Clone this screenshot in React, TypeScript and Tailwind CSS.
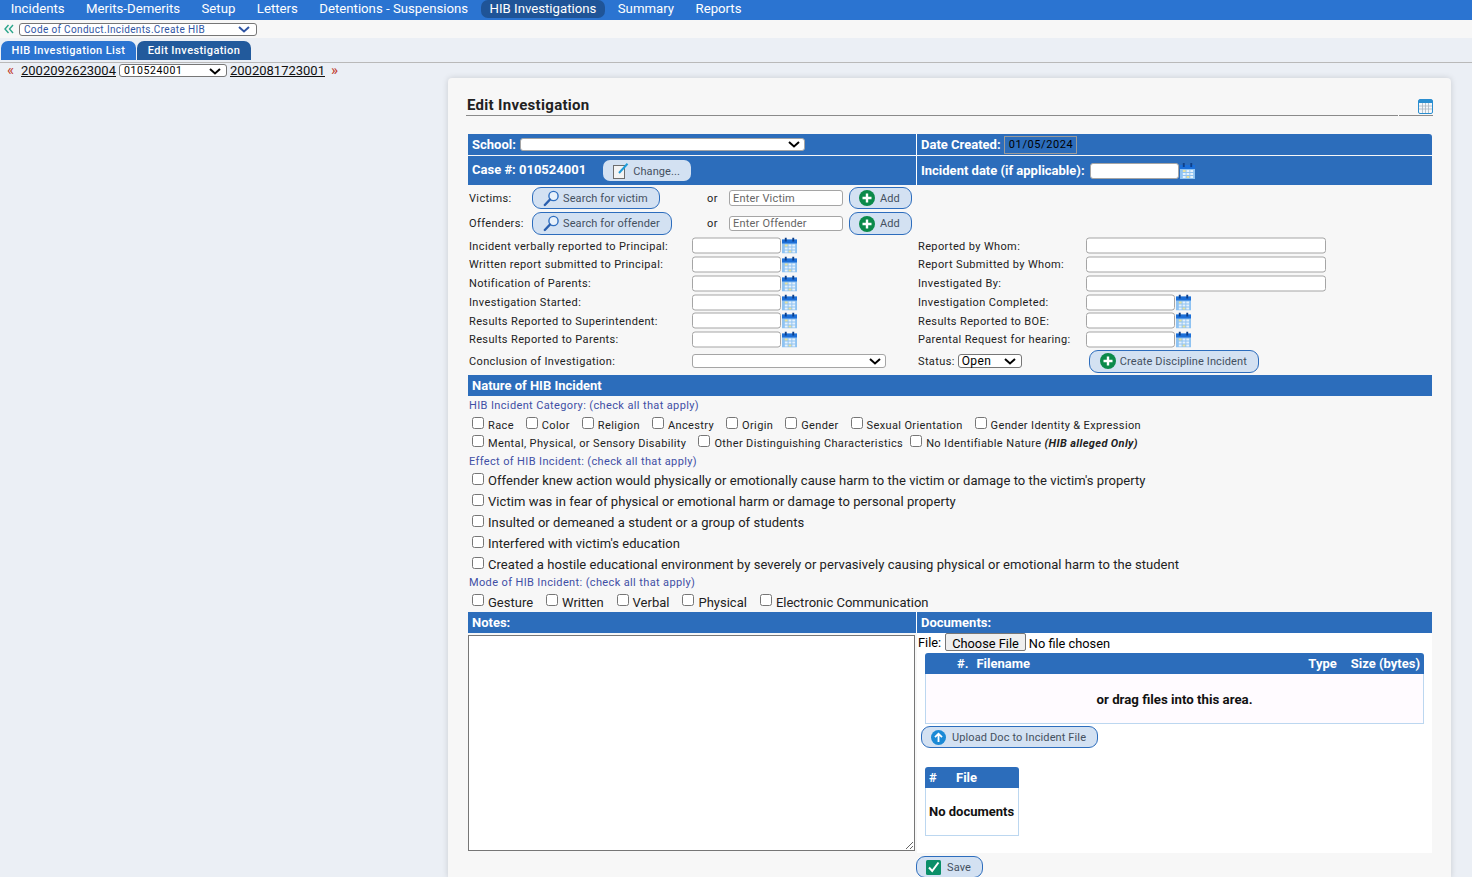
import type { ReactNode } from 'react';

function CalIcon({ className = '' }: { className?: string }) {
    return (
        <svg width="15" height="16" viewBox="0 0 16 16" preserveAspectRatio="none" className={`ml-px shrink-0 ${className}`}>
            <rect x="0" y="2" width="16" height="14" fill="#8fc3f2" />
            <rect x="0" y="2" width="16" height="4" fill="#1c6fd8" />
            <rect x="3" y="0" width="2" height="4" fill="#0d3f8a" />
            <rect x="11" y="0" width="2" height="4" fill="#0d3f8a" />
            <rect x="3" y="7" width="3" height="2" fill="#e8e2a0" />
            <rect x="7" y="7" width="3" height="2" fill="#e6f1fb" />
            <rect x="11" y="7" width="3" height="2" fill="#e6f1fb" />
            <rect x="3" y="10" width="3" height="2" fill="#e6f1fb" />
            <rect x="7" y="10" width="3" height="2" fill="#e6f1fb" />
            <rect x="11" y="10" width="3" height="2" fill="#e6f1fb" />
            <rect x="3" y="13" width="3" height="2" fill="#e6f1fb" />
            <rect x="7" y="13" width="3" height="2" fill="#e8e2a0" />
            <rect x="11" y="13" width="3" height="2" fill="#e6f1fb" />
        </svg>
    );
}

function PlusIcon() {
    return (
        <svg width="16" height="16" viewBox="0 0 16 16" className="shrink-0">
            <circle cx="8" cy="8" r="8" fill="#0b8a4a" />
            <path d="M8 3.500v9M3.500 8h9" stroke="#fff" strokeWidth="2.400" />
        </svg>
    );
}

function SearchIcon() {
    return (
        <svg width="17" height="17" viewBox="0 0 17 17" className="shrink-0">
            <circle cx="10.500" cy="6" r="4.600" fill="#e8f1fb" stroke="#2f6fc0" strokeWidth="1.400" />
            <path d="M7 9.500 1.800 15" stroke="#2a5fae" strokeWidth="2.400" strokeLinecap="round" />
        </svg>
    );
}

function PencilIcon() {
    return (
        <svg width="16" height="16" viewBox="0 0 16 16" className="shrink-0">
            <rect x="0.500" y="2.500" width="11" height="13" fill="#f4f4f4" stroke="#6d6d6d" />
            <path d="M6 10 14.500 0.800" stroke="#1f9bd8" strokeWidth="2" />
        </svg>
    );
}

function UploadIcon() {
    return (
        <svg width="15" height="15" viewBox="0 0 15 15" className="shrink-0">
            <circle cx="7.500" cy="7.500" r="7.500" fill="#1b8ad6" />
            <path d="M7.500 12V4M4 7.200l3.500-3.500L11 7.200" stroke="#fff" strokeWidth="1.800" fill="none" />
        </svg>
    );
}

function SaveIcon() {
    return (
        <svg width="15" height="15" viewBox="0 0 15 15" className="shrink-0">
            <rect width="15" height="15" rx="1.500" fill="#0a8f68" />
            <path d="M3 7.500 6.200 11 12.500 2.500" stroke="#fff" strokeWidth="2" fill="none" />
        </svg>
    );
}

function Pill({ icon, label, className }: { icon: ReactNode; label: string; className: string }) {
    return (
        <button className={`flex items-center rounded-[9px] border border-[#2d6dbd] bg-[#d3e1f2] text-[11px] tracking-[0.12px] text-[#44505f] ${className}`}>
            {icon}
            <span className="translate-y-px">{label}</span>
        </button>
    );
}

// closed dropdown: text on the left, heavy chevron on the right
function Dropdown({ text, className }: { text?: string; className: string }) {
    return (
        <div className={`flex items-center justify-between rounded-[3px] border bg-white leading-none ${className}`}>
            <span>{text}</span>
            <svg width="12" height="7" viewBox="0 0 12 7" className="shrink-0">
                <path d="M1 1l5 4.500L11 1" stroke="currentColor" strokeWidth="2" fill="none" />
            </svg>
        </div>
    );
}

function DateField({ wide }: { wide?: boolean }) {
    if (wide) {
        return <input className="h-[16px] w-[240px] -translate-y-[1.500px] rounded-[3px] border border-[#a5a5a5] bg-white" />;
    }
    return (
        <div className="flex -translate-y-[1.500px] items-center">
            <input className="h-[16px] w-[89px] rounded-[3px] border border-[#a5a5a5] bg-white" />
            <CalIcon />
        </div>
    );
}

function Check({ label, mr = 'mr-[8px]', lift = '-translate-y-[3px]' }: { label: ReactNode; mr?: string; lift?: string }) {
    return (
        <label className={`flex items-center ${mr}`}>
            <input type="checkbox" className={`m-0 ml-[4px] mr-[4px] h-[12px] w-[12px] ${lift}`} />
            <span>{label}</span>
        </label>
    );
}

const navItems = ['Incidents', 'Merits-Demerits', 'Setup', 'Letters', 'Detentions - Suspensions', 'HIB Investigations', 'Summary', 'Reports'];

const dateRows = [
    { h: 'h-[18px]', left: 'Incident verbally reported to Principal:', right: 'Reported by Whom:', wide: true },
    { h: 'h-[19px]', left: 'Written report submitted to Principal:', right: 'Report Submitted by Whom:', wide: true },
    { h: 'h-[19px]', left: 'Notification of Parents:', right: 'Investigated By:', wide: true },
    { h: 'h-[19px]', left: 'Investigation Started:', right: 'Investigation Completed:', wide: false },
    { h: 'h-[18px]', left: 'Results Reported to Superintendent:', right: 'Results Reported to BOE:', wide: false },
    { h: 'h-[19px]', left: 'Results Reported to Parents:', right: 'Parental Request for hearing:', wide: false },
];

const effects = [
    "Offender knew action would physically or emotionally cause harm to the victim or damage to the victim's property",
    'Victim was in fear of physical or emotional harm or damage to personal property',
    'Insulted or demeaned a student or a group of students',
    "Interfered with victim's education",
    'Created a hostile educational environment by severely or pervasively causing physical or emotional harm to the student',
];

export default function App() {
    return (
        <div className="flex h-[877px] flex-col overflow-hidden bg-[#ebeff5] font-['Roboto',sans-serif] text-[#222]">
            {/* top nav */}
            <nav className="flex h-[20px] shrink-0 items-start bg-[#2b74d1] text-[13.200px] text-white">
                {navItems.map((item) => (
                    <span
                        key={item}
                        className={`mx-[1.750px] flex h-[18px] items-center rounded-[7px] px-[9px] ${item === 'HIB Investigations' ? 'bg-[#1f5497]' : ''}`}
                    >
                        {item}
                    </span>
                ))}
            </nav>

            <div className="flex h-[18px] shrink-0 items-center bg-[#f7f7f7] pl-[4px]">
                <svg width="10" height="10" viewBox="0 0 10 10" className="mr-[5px]">
                    <path d="M4.500 1 1 5l3.500 4M9 1 5.500 5 9 9" stroke="#2aa58a" strokeWidth="1.400" fill="none" />
                </svg>
                <Dropdown
                    text="Code of Conduct.Incidents.Create HIB"
                    className="h-[13px] w-[238px] border-[#767676] pl-[4px] pr-[6px] pt-px text-[10px] tracking-[0.35px] text-[#2f55a4]"
                />
            </div>

            <div className="flex h-[25px] shrink-0 items-end border-b border-[#b9b9b9] pb-[2px] pl-[1px]">
                <div className="mr-[1px] flex h-[19px] w-[135px] items-center justify-center rounded-t-[7px] bg-[#2b74d1] pt-px text-[11px] font-medium tracking-[0.4px] text-white">
                    HIB Investigation List
                </div>
                <div className="flex h-[19px] w-[114px] items-center justify-center rounded-t-[7px] bg-[#225a9c] pt-px text-[11px] font-medium tracking-[0.4px] text-white">
                    Edit Investigation
                </div>
            </div>

            <div className="flex h-[15px] shrink-0 items-center pl-[7px] text-[13px] text-[#111]">
                <span className="w-[14px] text-[15px] leading-none text-[#c0392b]">«</span>
                <a className="underline">2002092623004</a>
                <Dropdown text="010524001" className="mx-[3px] h-[13px] w-[108px] border-[#767676] pl-[4px] pr-[5px] pt-[2px] text-[10.500px] tracking-[0.6px] text-black" />
                <a className="underline">2002081723001</a>
                <span className="ml-[6px] text-[15px] leading-none text-[#c0392b]">»</span>
            </div>

            {/* card */}
            <main className="ml-[448px] w-[1003px] shrink-0 grow rounded-t-[4px] bg-[#f7f7f7] pl-[20px] pr-[19px] shadow-[0_0_6px_rgba(0,0,0,0.15)]">
                <div className="relative -ml-[2px] -mr-[1px] flex h-[38px] items-end border-b border-[#8a8a8a]">
                    <h2 className="pl-px text-[15px] font-bold leading-[20px] tracking-[0.3px] text-[#222]">Edit Investigation</h2>
                    <span className="absolute -bottom-[1px] right-[34px] h-px w-px bg-white" />
                    <svg width="15" height="15" viewBox="0 0 15 15" className="absolute bottom-[1px] right-[0px]">
                        <rect x="0.500" y="0.500" width="14" height="14" rx="1.500" fill="#f4f7fa" stroke="#2a8ed0" />
                        <rect x="1" y="1" width="13" height="3" fill="#2a8ed0" />
                        <path d="M1 7h13M1 10h13M4.500 4v10M7.500 4v10M10.500 4v10" stroke="#a9b6c2" strokeWidth="0.800" />
                    </svg>
                </div>

                {/* header bars */}
                <div className="mt-[18px] grid grid-cols-[449px_515px] gap-y-px text-[13px] font-bold text-white">
                    <div className="flex h-[21px] items-center border-r border-white bg-[#2c6dbb] pl-[4px]">
                        <span className="mr-[4px]">School:</span>
                        <Dropdown className="h-[13px] w-[285px] border-[#a5a5a5] pr-[4px] text-black" />
                    </div>
                    <div className="flex h-[21px] items-center rounded-tr-[3px] bg-[#2c6dbb] pl-[4px]">
                        <span className="mr-[3px]">Date Created:</span>
                        <span className="flex h-[18px] w-[73px] items-center justify-center border border-[#9a9a9a] pl-[2px] pt-[2px] text-[11px] font-normal tracking-[0.6px] text-black">01/05/2024</span>
                    </div>
                    <div className="flex h-[29px] items-center border-r border-white bg-[#2c6dbb] pl-[4px]">
                        <span className="mr-[17px] -translate-y-px">Case #: 010524001</span>
                        <button className="flex h-[21px] w-[88px] items-center rounded-[7px] bg-[#d3e1f2] pl-[10px] text-[11px] font-normal tracking-[0.1px] text-[#44505f]">
                            <PencilIcon />
                            <span className="ml-[4px] translate-y-[2px]">Change...</span>
                        </button>
                    </div>
                    <div className="flex h-[29px] items-center bg-[#2c6dbb] pl-[4px]">
                        <span className="mr-[5px]">Incident date (if applicable):</span>
                        <input className="h-[16px] w-[89px] rounded-[3px] border border-[#a5a5a5] bg-white" />
                        <CalIcon />
                    </div>
                </div>

                {/* victims / offenders */}
                <div className="w-[448px] text-[11px] tracking-[0.37px]">
                    <div className="mt-[2px] flex h-[22px] items-center pl-[1px]">
                        <span className="w-[63px] translate-y-px">Victims:</span>
                        <Pill icon={<SearchIcon />} label="Search for victim" className="h-[22px] w-[128px] pl-[10px] [&>span]:ml-[3px]" />
                        <span className="ml-[47px] w-[22px] translate-y-px">or</span>
                        <input placeholder="Enter Victim" className="h-[16px] w-[114px] rounded-[3px] border border-[#a5a5a5] bg-white pl-[3px] pt-[2px] tracking-[0.2px] placeholder:text-[#666]" />
                        <Pill icon={<PlusIcon />} label="Add" className="ml-[6px] h-[22px] w-[63px] pl-[9px] [&>span]:ml-[5px]" />
                    </div>
                    <div className="mt-[3px] flex h-[23px] items-center pl-[1px]">
                        <span className="w-[63px] pt-px">Offenders:</span>
                        <Pill icon={<SearchIcon />} label="Search for offender" className="h-[23px] w-[140px] pl-[10px] [&>span]:ml-[3px]" />
                        <span className="ml-[35px] w-[22px] pt-px">or</span>
                        <input placeholder="Enter Offender" className="h-[15px] w-[114px] rounded-[3px] border border-[#a5a5a5] bg-white pl-[3px] pt-[2px] tracking-[0.2px] placeholder:text-[#666]" />
                        <Pill icon={<PlusIcon />} label="Add" className="ml-[6px] h-[23px] w-[63px] pl-[9px] [&>span]:ml-[5px]" />
                    </div>
                </div>

                {/* date rows */}
                <div className="mt-[3px] text-[11px] tracking-[0.37px]">
                    {dateRows.map((row) => (
                        <div key={row.left} className={`grid grid-cols-[450px_514px] items-center ${row.h}`}>
                            <div className="flex items-center pl-[1px]">
                                <span className="w-[223px]">{row.left}</span>
                                <DateField />
                            </div>
                            <div className="flex items-center">
                                <span className="w-[168px]">{row.right}</span>
                                <DateField wide={row.wide} />
                            </div>
                        </div>
                    ))}
                    <div className="grid h-[24px] grid-cols-[450px_514px] items-center">
                        <div className="flex items-center pl-[1px]">
                            <span className="w-[223px]">Conclusion of Investigation:</span>
                            <Dropdown className="h-[14px] w-[194px] -translate-y-px border-[#a5a5a5] pr-[4px] text-black" />
                        </div>
                        <div className="flex items-center">
                            <span className="mr-[3px]">Status:</span>
                            <Dropdown text="Open" className="h-[14px] w-[64px] -translate-y-px border-[#767676] pl-[3px] pr-[5px] text-[12px] tracking-[0.4px] text-black" />
                            <Pill icon={<PlusIcon />} label="Create Discipline Incident" className="ml-[67px] h-[23px] w-[170px] -translate-y-px pl-[10px] [&>span]:ml-[4px]" />
                        </div>
                    </div>
                </div>

                {/* nature of incident */}
                <div className="mt-[1px] flex h-[21px] items-center bg-[#2c6dbb] pl-[4px] text-[13px] font-bold text-white">Nature of HIB Incident</div>
                <div className="text-[11px] tracking-[0.37px]">
                    <div className="mt-[2px] flex h-[16px] items-center pl-[1px] text-[#3f4fa5]">HIB Incident Category: (check all that apply)</div>
                    <div className="mt-[3px] flex h-[18px] items-center">
                        {['Race', 'Color', 'Religion', 'Ancestry', 'Origin', 'Gender', 'Sexual Orientation', 'Gender Identity & Expression'].map((c) => (
                            <Check key={c} label={c} />
                        ))}
                    </div>
                    <div className="flex h-[18px] items-center">
                        <Check label="Mental, Physical, or Sensory Disability" />
                        <Check label="Other Distinguishing Characteristics" mr="mr-[3px]" />
                        <Check
                            label={
                                <>
                                    No Identifiable Nature <b className="italic">(HIB alleged Only)</b>
                                </>
                            }
                        />
                    </div>
                    <div className="flex h-[18px] items-center pl-[1px] text-[#3f4fa5]">Effect of HIB Incident: (check all that apply)</div>
                </div>
                <div className="-mt-[1px] text-[13px] tracking-[0.05px]">
                    {effects.map((e) => (
                        <div key={e} className="flex h-[21px] items-center">
                            <Check label={e} mr="mr-0" lift="-translate-y-[2px]" />
                        </div>
                    ))}
                </div>
                <div className="flex h-[16px] items-center pl-[1px] text-[11px] tracking-[0.37px] text-[#3f4fa5]">Mode of HIB Incident: (check all that apply)</div>
                <div className="mt-[2px] flex h-[19px] items-center text-[13px]">
                    {['Gesture', 'Written', 'Verbal', 'Physical', 'Electronic Communication'].map((c) => (
                        <Check key={c} label={c} mr="mr-[9px]" />
                    ))}
                </div>

                {/* notes + documents */}
                <div className="grid grid-cols-[449px_515px] text-[13px]">
                    <div className="flex h-[21px] items-center border-r border-white bg-[#2c6dbb] pl-[4px] font-bold text-white">Notes:</div>
                    <div className="flex h-[21px] items-center bg-[#2c6dbb] pl-[4px] font-bold text-white">Documents:</div>
                    <div className="h-[220px] pt-[2px]">
                        <textarea className="block h-[216px] w-[447px] border border-[#767676] bg-white" />
                    </div>
                    <div className="h-[220px] bg-white">
                        <div className="flex h-[20px] items-center pl-[1px] text-[12.800px] text-black">
                            <span className="mr-[4px]">File:</span>
                            <input
                                type="file"
                                className="w-[300px] file:mr-[3px] file:h-[18px] file:rounded-[2px] file:border file:border-[#767676] file:bg-[#efefef] file:px-[6px]"
                            />
                        </div>
                        <div className="ml-[8px] w-[499px]">
                            <div className="flex h-[21px] items-center rounded-t-[3px] bg-[#2c6dbb] pl-[32px] pr-[4px] font-bold text-white">
                                <span className="mr-[8px]">#.</span>
                                <span className="flex-1">Filename</span>
                                <span className="mr-[14px]">Type</span>
                                <span>Size (bytes)</span>
                            </div>
                            <div className="flex h-[50px] items-center justify-center border border-t-0 border-[#bcd7f0] bg-[#fffbff] pt-[3px] text-[13.250px] font-bold text-[#111]">or drag files into this area.</div>
                        </div>
                        <Pill icon={<UploadIcon />} label="Upload Doc to Incident File" className="ml-[4px] mt-[2px] h-[22px] w-[177px] pl-[9px] [&>span]:ml-[6px]" />
                        <div className="ml-[8px] mt-[19px] w-[94px]">
                            <div className="flex h-[21px] items-center rounded-t-[3px] bg-[#2c6dbb] pl-[4px] font-bold text-white">
                                <span className="w-[27px]">#</span>
                                <span>File</span>
                            </div>
                            <div className="flex h-[48px] items-center border border-t-0 border-[#bcd7f0] bg-white pl-[3px] font-bold text-[#111]">No documents</div>
                        </div>
                    </div>
                </div>

                <div className="ml-[448px] mt-[3px]">
                    <Pill icon={<SaveIcon />} label="Save" className="h-[22px] w-[67px] pl-[9px] [&>span]:ml-[6px]" />
                </div>
            </main>
        </div>
    );
}
